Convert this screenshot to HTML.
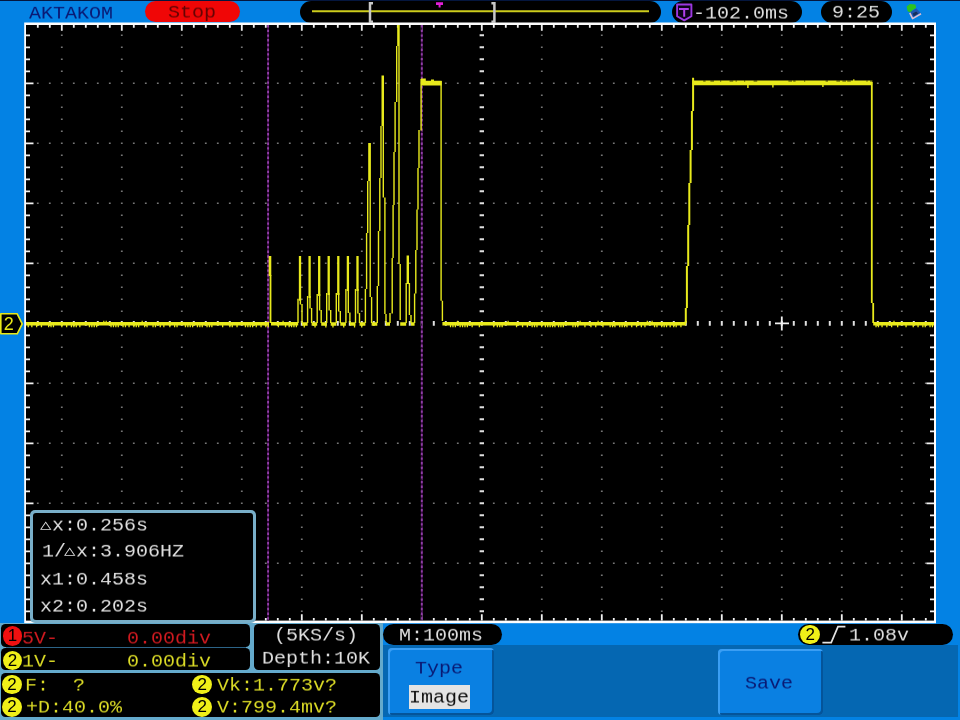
<!DOCTYPE html>
<html lang="en"><head><meta charset="utf-8"><title>AKTAKOM oscilloscope</title>
<style>
html,body{margin:0;padding:0;}
body{width:960px;height:720px;overflow:hidden;background:#0382e4;position:relative;
 font-family:"Liberation Mono","DejaVu Sans Mono",monospace;font-size:20px;line-height:20px;}
.a{position:absolute;white-space:pre;}
.pill{position:absolute;background:#000;border-radius:11px;}
.t{position:absolute;white-space:pre;font-size:20px;line-height:20px;height:20px;transform:scaleY(0.9);transform-origin:0 0;will-change:transform;}
.tri{position:absolute;font-family:"DejaVu Sans Mono",monospace;font-size:19px;line-height:20px;height:20px;color:#dcdcdc;transform:scaleY(.72);transform-origin:0 100%;}
.w{color:#dedede;} .y{color:#dada26;} .r{color:#d01a20;} .n{color:#0a1a74;}
.box{position:absolute;background:#000;border-radius:4.5px;}
.circ{position:absolute;width:19.8px;height:19.8px;border-radius:50%;color:#000;
 font-family:"Liberation Sans",sans-serif;font-size:17px;line-height:19.8px;text-align:center;}
.btn{position:absolute;background:#0a80e2;border-radius:4px;box-shadow:inset 2px 2px 0 #3a9ef4, inset -2px -2px 0 #04549a;}
</style></head><body>
<!-- top strip -->
<div class="a" style="left:0;top:0;width:960px;height:1.3px;background:#04163e"></div>

<div class="t n" style="left:29.0px;top:5.1px;">AKTAKOM</div>
<div class="pill" style="left:144.6px;top:1.2px;width:95.6px;height:20.6px;background:#f00606"></div>
<div class="t " style="left:167.6px;top:3.6px;color:#640404">Stop</div>
<div class="pill" style="left:300.4px;top:0.6px;width:360.6px;height:22.2px"></div>
<div class="pill" style="left:671.8px;top:0.6px;width:130px;height:22px"></div>
<div class="t w" style="left:692.8px;top:5.1px;">-102.0ms</div>
<div class="pill" style="left:820.6px;top:0.6px;width:71.2px;height:22px"></div>
<div class="t w" style="left:831.5px;top:4.1px;">9:25</div>

<!-- graticule + waveform -->
<svg class="a" style="left:0;top:0" width="960" height="720" viewBox="0 0 960 720">
<rect x="24.2" y="22.5" width="911.8" height="600.7" fill="#fdfdfd"/>
<rect x="26" y="25" width="908" height="595.6" fill="#000"/>
<path d="M36.9 83.3h1.8M48.9 83.3h1.8M60.9 83.3h1.8M72.9 83.3h1.8M84.9 83.3h1.8M96.9 83.3h1.8M108.9 83.3h1.8M120.9 83.3h1.8M132.9 83.3h1.8M144.9 83.3h1.8M156.9 83.3h1.8M168.9 83.3h1.8M180.9 83.3h1.8M192.9 83.3h1.8M204.9 83.3h1.8M216.9 83.3h1.8M228.9 83.3h1.8M240.9 83.3h1.8M252.9 83.3h1.8M264.9 83.3h1.8M276.9 83.3h1.8M288.9 83.3h1.8M300.9 83.3h1.8M312.9 83.3h1.8M324.9 83.3h1.8M336.9 83.3h1.8M348.9 83.3h1.8M360.9 83.3h1.8M372.9 83.3h1.8M384.9 83.3h1.8M396.9 83.3h1.8M408.9 83.3h1.8M420.9 83.3h1.8M432.9 83.3h1.8M444.9 83.3h1.8M456.9 83.3h1.8M468.9 83.3h1.8M492.9 83.3h1.8M504.9 83.3h1.8M516.9 83.3h1.8M528.9 83.3h1.8M540.9 83.3h1.8M552.9 83.3h1.8M564.9 83.3h1.8M576.9 83.3h1.8M588.9 83.3h1.8M600.9 83.3h1.8M612.9 83.3h1.8M624.9 83.3h1.8M636.9 83.3h1.8M648.9 83.3h1.8M660.9 83.3h1.8M672.9 83.3h1.8M684.9 83.3h1.8M696.9 83.3h1.8M708.9 83.3h1.8M720.9 83.3h1.8M732.9 83.3h1.8M744.9 83.3h1.8M756.9 83.3h1.8M768.9 83.3h1.8M780.9 83.3h1.8M792.9 83.3h1.8M804.9 83.3h1.8M816.9 83.3h1.8M828.9 83.3h1.8M840.9 83.3h1.8M852.9 83.3h1.8M864.9 83.3h1.8M876.9 83.3h1.8M888.9 83.3h1.8M900.9 83.3h1.8M912.9 83.3h1.8M924.9 83.3h1.8M36.9 143.3h1.8M48.9 143.3h1.8M60.9 143.3h1.8M72.9 143.3h1.8M84.9 143.3h1.8M96.9 143.3h1.8M108.9 143.3h1.8M120.9 143.3h1.8M132.9 143.3h1.8M144.9 143.3h1.8M156.9 143.3h1.8M168.9 143.3h1.8M180.9 143.3h1.8M192.9 143.3h1.8M204.9 143.3h1.8M216.9 143.3h1.8M228.9 143.3h1.8M240.9 143.3h1.8M252.9 143.3h1.8M264.9 143.3h1.8M276.9 143.3h1.8M288.9 143.3h1.8M300.9 143.3h1.8M312.9 143.3h1.8M324.9 143.3h1.8M336.9 143.3h1.8M348.9 143.3h1.8M360.9 143.3h1.8M372.9 143.3h1.8M384.9 143.3h1.8M396.9 143.3h1.8M408.9 143.3h1.8M420.9 143.3h1.8M432.9 143.3h1.8M444.9 143.3h1.8M456.9 143.3h1.8M468.9 143.3h1.8M492.9 143.3h1.8M504.9 143.3h1.8M516.9 143.3h1.8M528.9 143.3h1.8M540.9 143.3h1.8M552.9 143.3h1.8M564.9 143.3h1.8M576.9 143.3h1.8M588.9 143.3h1.8M600.9 143.3h1.8M612.9 143.3h1.8M624.9 143.3h1.8M636.9 143.3h1.8M648.9 143.3h1.8M660.9 143.3h1.8M672.9 143.3h1.8M684.9 143.3h1.8M696.9 143.3h1.8M708.9 143.3h1.8M720.9 143.3h1.8M732.9 143.3h1.8M744.9 143.3h1.8M756.9 143.3h1.8M768.9 143.3h1.8M780.9 143.3h1.8M792.9 143.3h1.8M804.9 143.3h1.8M816.9 143.3h1.8M828.9 143.3h1.8M840.9 143.3h1.8M852.9 143.3h1.8M864.9 143.3h1.8M876.9 143.3h1.8M888.9 143.3h1.8M900.9 143.3h1.8M912.9 143.3h1.8M924.9 143.3h1.8M36.9 203.3h1.8M48.9 203.3h1.8M60.9 203.3h1.8M72.9 203.3h1.8M84.9 203.3h1.8M96.9 203.3h1.8M108.9 203.3h1.8M120.9 203.3h1.8M132.9 203.3h1.8M144.9 203.3h1.8M156.9 203.3h1.8M168.9 203.3h1.8M180.9 203.3h1.8M192.9 203.3h1.8M204.9 203.3h1.8M216.9 203.3h1.8M228.9 203.3h1.8M240.9 203.3h1.8M252.9 203.3h1.8M264.9 203.3h1.8M276.9 203.3h1.8M288.9 203.3h1.8M300.9 203.3h1.8M312.9 203.3h1.8M324.9 203.3h1.8M336.9 203.3h1.8M348.9 203.3h1.8M360.9 203.3h1.8M372.9 203.3h1.8M384.9 203.3h1.8M396.9 203.3h1.8M408.9 203.3h1.8M420.9 203.3h1.8M432.9 203.3h1.8M444.9 203.3h1.8M456.9 203.3h1.8M468.9 203.3h1.8M492.9 203.3h1.8M504.9 203.3h1.8M516.9 203.3h1.8M528.9 203.3h1.8M540.9 203.3h1.8M552.9 203.3h1.8M564.9 203.3h1.8M576.9 203.3h1.8M588.9 203.3h1.8M600.9 203.3h1.8M612.9 203.3h1.8M624.9 203.3h1.8M636.9 203.3h1.8M648.9 203.3h1.8M660.9 203.3h1.8M672.9 203.3h1.8M684.9 203.3h1.8M696.9 203.3h1.8M708.9 203.3h1.8M720.9 203.3h1.8M732.9 203.3h1.8M744.9 203.3h1.8M756.9 203.3h1.8M768.9 203.3h1.8M780.9 203.3h1.8M792.9 203.3h1.8M804.9 203.3h1.8M816.9 203.3h1.8M828.9 203.3h1.8M840.9 203.3h1.8M852.9 203.3h1.8M864.9 203.3h1.8M876.9 203.3h1.8M888.9 203.3h1.8M900.9 203.3h1.8M912.9 203.3h1.8M924.9 203.3h1.8M36.9 263.3h1.8M48.9 263.3h1.8M60.9 263.3h1.8M72.9 263.3h1.8M84.9 263.3h1.8M96.9 263.3h1.8M108.9 263.3h1.8M120.9 263.3h1.8M132.9 263.3h1.8M144.9 263.3h1.8M156.9 263.3h1.8M168.9 263.3h1.8M180.9 263.3h1.8M192.9 263.3h1.8M204.9 263.3h1.8M216.9 263.3h1.8M228.9 263.3h1.8M240.9 263.3h1.8M252.9 263.3h1.8M264.9 263.3h1.8M276.9 263.3h1.8M288.9 263.3h1.8M300.9 263.3h1.8M312.9 263.3h1.8M324.9 263.3h1.8M336.9 263.3h1.8M348.9 263.3h1.8M360.9 263.3h1.8M372.9 263.3h1.8M384.9 263.3h1.8M396.9 263.3h1.8M408.9 263.3h1.8M420.9 263.3h1.8M432.9 263.3h1.8M444.9 263.3h1.8M456.9 263.3h1.8M468.9 263.3h1.8M492.9 263.3h1.8M504.9 263.3h1.8M516.9 263.3h1.8M528.9 263.3h1.8M540.9 263.3h1.8M552.9 263.3h1.8M564.9 263.3h1.8M576.9 263.3h1.8M588.9 263.3h1.8M600.9 263.3h1.8M612.9 263.3h1.8M624.9 263.3h1.8M636.9 263.3h1.8M648.9 263.3h1.8M660.9 263.3h1.8M672.9 263.3h1.8M684.9 263.3h1.8M696.9 263.3h1.8M708.9 263.3h1.8M720.9 263.3h1.8M732.9 263.3h1.8M744.9 263.3h1.8M756.9 263.3h1.8M768.9 263.3h1.8M780.9 263.3h1.8M792.9 263.3h1.8M804.9 263.3h1.8M816.9 263.3h1.8M828.9 263.3h1.8M840.9 263.3h1.8M852.9 263.3h1.8M864.9 263.3h1.8M876.9 263.3h1.8M888.9 263.3h1.8M900.9 263.3h1.8M912.9 263.3h1.8M924.9 263.3h1.8M36.9 383.3h1.8M48.9 383.3h1.8M60.9 383.3h1.8M72.9 383.3h1.8M84.9 383.3h1.8M96.9 383.3h1.8M108.9 383.3h1.8M120.9 383.3h1.8M132.9 383.3h1.8M144.9 383.3h1.8M156.9 383.3h1.8M168.9 383.3h1.8M180.9 383.3h1.8M192.9 383.3h1.8M204.9 383.3h1.8M216.9 383.3h1.8M228.9 383.3h1.8M240.9 383.3h1.8M252.9 383.3h1.8M264.9 383.3h1.8M276.9 383.3h1.8M288.9 383.3h1.8M300.9 383.3h1.8M312.9 383.3h1.8M324.9 383.3h1.8M336.9 383.3h1.8M348.9 383.3h1.8M360.9 383.3h1.8M372.9 383.3h1.8M384.9 383.3h1.8M396.9 383.3h1.8M408.9 383.3h1.8M420.9 383.3h1.8M432.9 383.3h1.8M444.9 383.3h1.8M456.9 383.3h1.8M468.9 383.3h1.8M492.9 383.3h1.8M504.9 383.3h1.8M516.9 383.3h1.8M528.9 383.3h1.8M540.9 383.3h1.8M552.9 383.3h1.8M564.9 383.3h1.8M576.9 383.3h1.8M588.9 383.3h1.8M600.9 383.3h1.8M612.9 383.3h1.8M624.9 383.3h1.8M636.9 383.3h1.8M648.9 383.3h1.8M660.9 383.3h1.8M672.9 383.3h1.8M684.9 383.3h1.8M696.9 383.3h1.8M708.9 383.3h1.8M720.9 383.3h1.8M732.9 383.3h1.8M744.9 383.3h1.8M756.9 383.3h1.8M768.9 383.3h1.8M780.9 383.3h1.8M792.9 383.3h1.8M804.9 383.3h1.8M816.9 383.3h1.8M828.9 383.3h1.8M840.9 383.3h1.8M852.9 383.3h1.8M864.9 383.3h1.8M876.9 383.3h1.8M888.9 383.3h1.8M900.9 383.3h1.8M912.9 383.3h1.8M924.9 383.3h1.8M36.9 443.3h1.8M48.9 443.3h1.8M60.9 443.3h1.8M72.9 443.3h1.8M84.9 443.3h1.8M96.9 443.3h1.8M108.9 443.3h1.8M120.9 443.3h1.8M132.9 443.3h1.8M144.9 443.3h1.8M156.9 443.3h1.8M168.9 443.3h1.8M180.9 443.3h1.8M192.9 443.3h1.8M204.9 443.3h1.8M216.9 443.3h1.8M228.9 443.3h1.8M240.9 443.3h1.8M252.9 443.3h1.8M264.9 443.3h1.8M276.9 443.3h1.8M288.9 443.3h1.8M300.9 443.3h1.8M312.9 443.3h1.8M324.9 443.3h1.8M336.9 443.3h1.8M348.9 443.3h1.8M360.9 443.3h1.8M372.9 443.3h1.8M384.9 443.3h1.8M396.9 443.3h1.8M408.9 443.3h1.8M420.9 443.3h1.8M432.9 443.3h1.8M444.9 443.3h1.8M456.9 443.3h1.8M468.9 443.3h1.8M492.9 443.3h1.8M504.9 443.3h1.8M516.9 443.3h1.8M528.9 443.3h1.8M540.9 443.3h1.8M552.9 443.3h1.8M564.9 443.3h1.8M576.9 443.3h1.8M588.9 443.3h1.8M600.9 443.3h1.8M612.9 443.3h1.8M624.9 443.3h1.8M636.9 443.3h1.8M648.9 443.3h1.8M660.9 443.3h1.8M672.9 443.3h1.8M684.9 443.3h1.8M696.9 443.3h1.8M708.9 443.3h1.8M720.9 443.3h1.8M732.9 443.3h1.8M744.9 443.3h1.8M756.9 443.3h1.8M768.9 443.3h1.8M780.9 443.3h1.8M792.9 443.3h1.8M804.9 443.3h1.8M816.9 443.3h1.8M828.9 443.3h1.8M840.9 443.3h1.8M852.9 443.3h1.8M864.9 443.3h1.8M876.9 443.3h1.8M888.9 443.3h1.8M900.9 443.3h1.8M912.9 443.3h1.8M924.9 443.3h1.8M36.9 503.3h1.8M48.9 503.3h1.8M60.9 503.3h1.8M72.9 503.3h1.8M84.9 503.3h1.8M96.9 503.3h1.8M108.9 503.3h1.8M120.9 503.3h1.8M132.9 503.3h1.8M144.9 503.3h1.8M156.9 503.3h1.8M168.9 503.3h1.8M180.9 503.3h1.8M192.9 503.3h1.8M204.9 503.3h1.8M216.9 503.3h1.8M228.9 503.3h1.8M240.9 503.3h1.8M252.9 503.3h1.8M264.9 503.3h1.8M276.9 503.3h1.8M288.9 503.3h1.8M300.9 503.3h1.8M312.9 503.3h1.8M324.9 503.3h1.8M336.9 503.3h1.8M348.9 503.3h1.8M360.9 503.3h1.8M372.9 503.3h1.8M384.9 503.3h1.8M396.9 503.3h1.8M408.9 503.3h1.8M420.9 503.3h1.8M432.9 503.3h1.8M444.9 503.3h1.8M456.9 503.3h1.8M468.9 503.3h1.8M492.9 503.3h1.8M504.9 503.3h1.8M516.9 503.3h1.8M528.9 503.3h1.8M540.9 503.3h1.8M552.9 503.3h1.8M564.9 503.3h1.8M576.9 503.3h1.8M588.9 503.3h1.8M600.9 503.3h1.8M612.9 503.3h1.8M624.9 503.3h1.8M636.9 503.3h1.8M648.9 503.3h1.8M660.9 503.3h1.8M672.9 503.3h1.8M684.9 503.3h1.8M696.9 503.3h1.8M708.9 503.3h1.8M720.9 503.3h1.8M732.9 503.3h1.8M744.9 503.3h1.8M756.9 503.3h1.8M768.9 503.3h1.8M780.9 503.3h1.8M792.9 503.3h1.8M804.9 503.3h1.8M816.9 503.3h1.8M828.9 503.3h1.8M840.9 503.3h1.8M852.9 503.3h1.8M864.9 503.3h1.8M876.9 503.3h1.8M888.9 503.3h1.8M900.9 503.3h1.8M912.9 503.3h1.8M924.9 503.3h1.8M36.9 563.3h1.8M48.9 563.3h1.8M60.9 563.3h1.8M72.9 563.3h1.8M84.9 563.3h1.8M96.9 563.3h1.8M108.9 563.3h1.8M120.9 563.3h1.8M132.9 563.3h1.8M144.9 563.3h1.8M156.9 563.3h1.8M168.9 563.3h1.8M180.9 563.3h1.8M192.9 563.3h1.8M204.9 563.3h1.8M216.9 563.3h1.8M228.9 563.3h1.8M240.9 563.3h1.8M252.9 563.3h1.8M264.9 563.3h1.8M276.9 563.3h1.8M288.9 563.3h1.8M300.9 563.3h1.8M312.9 563.3h1.8M324.9 563.3h1.8M336.9 563.3h1.8M348.9 563.3h1.8M360.9 563.3h1.8M372.9 563.3h1.8M384.9 563.3h1.8M396.9 563.3h1.8M408.9 563.3h1.8M420.9 563.3h1.8M432.9 563.3h1.8M444.9 563.3h1.8M456.9 563.3h1.8M468.9 563.3h1.8M492.9 563.3h1.8M504.9 563.3h1.8M516.9 563.3h1.8M528.9 563.3h1.8M540.9 563.3h1.8M552.9 563.3h1.8M564.9 563.3h1.8M576.9 563.3h1.8M588.9 563.3h1.8M600.9 563.3h1.8M612.9 563.3h1.8M624.9 563.3h1.8M636.9 563.3h1.8M648.9 563.3h1.8M660.9 563.3h1.8M672.9 563.3h1.8M684.9 563.3h1.8M696.9 563.3h1.8M708.9 563.3h1.8M720.9 563.3h1.8M732.9 563.3h1.8M744.9 563.3h1.8M756.9 563.3h1.8M768.9 563.3h1.8M780.9 563.3h1.8M792.9 563.3h1.8M804.9 563.3h1.8M816.9 563.3h1.8M828.9 563.3h1.8M840.9 563.3h1.8M852.9 563.3h1.8M864.9 563.3h1.8M876.9 563.3h1.8M888.9 563.3h1.8M900.9 563.3h1.8M912.9 563.3h1.8M924.9 563.3h1.8M60.9 35.3h1.8M60.9 47.3h1.8M60.9 59.3h1.8M60.9 71.3h1.8M60.9 95.3h1.8M60.9 107.3h1.8M60.9 119.3h1.8M60.9 131.3h1.8M60.9 155.3h1.8M60.9 167.3h1.8M60.9 179.3h1.8M60.9 191.3h1.8M60.9 215.3h1.8M60.9 227.3h1.8M60.9 239.3h1.8M60.9 251.3h1.8M60.9 275.3h1.8M60.9 287.3h1.8M60.9 299.3h1.8M60.9 311.3h1.8M60.9 335.3h1.8M60.9 347.3h1.8M60.9 359.3h1.8M60.9 371.3h1.8M60.9 395.3h1.8M60.9 407.3h1.8M60.9 419.3h1.8M60.9 431.3h1.8M60.9 455.3h1.8M60.9 467.3h1.8M60.9 479.3h1.8M60.9 491.3h1.8M60.9 515.3h1.8M60.9 527.3h1.8M60.9 539.3h1.8M60.9 551.3h1.8M60.9 575.3h1.8M60.9 587.3h1.8M60.9 599.3h1.8M60.9 611.3h1.8M120.9 35.3h1.8M120.9 47.3h1.8M120.9 59.3h1.8M120.9 71.3h1.8M120.9 95.3h1.8M120.9 107.3h1.8M120.9 119.3h1.8M120.9 131.3h1.8M120.9 155.3h1.8M120.9 167.3h1.8M120.9 179.3h1.8M120.9 191.3h1.8M120.9 215.3h1.8M120.9 227.3h1.8M120.9 239.3h1.8M120.9 251.3h1.8M120.9 275.3h1.8M120.9 287.3h1.8M120.9 299.3h1.8M120.9 311.3h1.8M120.9 335.3h1.8M120.9 347.3h1.8M120.9 359.3h1.8M120.9 371.3h1.8M120.9 395.3h1.8M120.9 407.3h1.8M120.9 419.3h1.8M120.9 431.3h1.8M120.9 455.3h1.8M120.9 467.3h1.8M120.9 479.3h1.8M120.9 491.3h1.8M120.9 515.3h1.8M120.9 527.3h1.8M120.9 539.3h1.8M120.9 551.3h1.8M120.9 575.3h1.8M120.9 587.3h1.8M120.9 599.3h1.8M120.9 611.3h1.8M180.9 35.3h1.8M180.9 47.3h1.8M180.9 59.3h1.8M180.9 71.3h1.8M180.9 95.3h1.8M180.9 107.3h1.8M180.9 119.3h1.8M180.9 131.3h1.8M180.9 155.3h1.8M180.9 167.3h1.8M180.9 179.3h1.8M180.9 191.3h1.8M180.9 215.3h1.8M180.9 227.3h1.8M180.9 239.3h1.8M180.9 251.3h1.8M180.9 275.3h1.8M180.9 287.3h1.8M180.9 299.3h1.8M180.9 311.3h1.8M180.9 335.3h1.8M180.9 347.3h1.8M180.9 359.3h1.8M180.9 371.3h1.8M180.9 395.3h1.8M180.9 407.3h1.8M180.9 419.3h1.8M180.9 431.3h1.8M180.9 455.3h1.8M180.9 467.3h1.8M180.9 479.3h1.8M180.9 491.3h1.8M180.9 515.3h1.8M180.9 527.3h1.8M180.9 539.3h1.8M180.9 551.3h1.8M180.9 575.3h1.8M180.9 587.3h1.8M180.9 599.3h1.8M180.9 611.3h1.8M240.9 35.3h1.8M240.9 47.3h1.8M240.9 59.3h1.8M240.9 71.3h1.8M240.9 95.3h1.8M240.9 107.3h1.8M240.9 119.3h1.8M240.9 131.3h1.8M240.9 155.3h1.8M240.9 167.3h1.8M240.9 179.3h1.8M240.9 191.3h1.8M240.9 215.3h1.8M240.9 227.3h1.8M240.9 239.3h1.8M240.9 251.3h1.8M240.9 275.3h1.8M240.9 287.3h1.8M240.9 299.3h1.8M240.9 311.3h1.8M240.9 335.3h1.8M240.9 347.3h1.8M240.9 359.3h1.8M240.9 371.3h1.8M240.9 395.3h1.8M240.9 407.3h1.8M240.9 419.3h1.8M240.9 431.3h1.8M240.9 455.3h1.8M240.9 467.3h1.8M240.9 479.3h1.8M240.9 491.3h1.8M240.9 515.3h1.8M240.9 527.3h1.8M240.9 539.3h1.8M240.9 551.3h1.8M240.9 575.3h1.8M240.9 587.3h1.8M240.9 599.3h1.8M240.9 611.3h1.8M300.9 35.3h1.8M300.9 47.3h1.8M300.9 59.3h1.8M300.9 71.3h1.8M300.9 95.3h1.8M300.9 107.3h1.8M300.9 119.3h1.8M300.9 131.3h1.8M300.9 155.3h1.8M300.9 167.3h1.8M300.9 179.3h1.8M300.9 191.3h1.8M300.9 215.3h1.8M300.9 227.3h1.8M300.9 239.3h1.8M300.9 251.3h1.8M300.9 275.3h1.8M300.9 287.3h1.8M300.9 299.3h1.8M300.9 311.3h1.8M300.9 335.3h1.8M300.9 347.3h1.8M300.9 359.3h1.8M300.9 371.3h1.8M300.9 395.3h1.8M300.9 407.3h1.8M300.9 419.3h1.8M300.9 431.3h1.8M300.9 455.3h1.8M300.9 467.3h1.8M300.9 479.3h1.8M300.9 491.3h1.8M300.9 515.3h1.8M300.9 527.3h1.8M300.9 539.3h1.8M300.9 551.3h1.8M300.9 575.3h1.8M300.9 587.3h1.8M300.9 599.3h1.8M300.9 611.3h1.8M360.9 35.3h1.8M360.9 47.3h1.8M360.9 59.3h1.8M360.9 71.3h1.8M360.9 95.3h1.8M360.9 107.3h1.8M360.9 119.3h1.8M360.9 131.3h1.8M360.9 155.3h1.8M360.9 167.3h1.8M360.9 179.3h1.8M360.9 191.3h1.8M360.9 215.3h1.8M360.9 227.3h1.8M360.9 239.3h1.8M360.9 251.3h1.8M360.9 275.3h1.8M360.9 287.3h1.8M360.9 299.3h1.8M360.9 311.3h1.8M360.9 335.3h1.8M360.9 347.3h1.8M360.9 359.3h1.8M360.9 371.3h1.8M360.9 395.3h1.8M360.9 407.3h1.8M360.9 419.3h1.8M360.9 431.3h1.8M360.9 455.3h1.8M360.9 467.3h1.8M360.9 479.3h1.8M360.9 491.3h1.8M360.9 515.3h1.8M360.9 527.3h1.8M360.9 539.3h1.8M360.9 551.3h1.8M360.9 575.3h1.8M360.9 587.3h1.8M360.9 599.3h1.8M360.9 611.3h1.8M420.9 35.3h1.8M420.9 47.3h1.8M420.9 59.3h1.8M420.9 71.3h1.8M420.9 95.3h1.8M420.9 107.3h1.8M420.9 119.3h1.8M420.9 131.3h1.8M420.9 155.3h1.8M420.9 167.3h1.8M420.9 179.3h1.8M420.9 191.3h1.8M420.9 215.3h1.8M420.9 227.3h1.8M420.9 239.3h1.8M420.9 251.3h1.8M420.9 275.3h1.8M420.9 287.3h1.8M420.9 299.3h1.8M420.9 311.3h1.8M420.9 335.3h1.8M420.9 347.3h1.8M420.9 359.3h1.8M420.9 371.3h1.8M420.9 395.3h1.8M420.9 407.3h1.8M420.9 419.3h1.8M420.9 431.3h1.8M420.9 455.3h1.8M420.9 467.3h1.8M420.9 479.3h1.8M420.9 491.3h1.8M420.9 515.3h1.8M420.9 527.3h1.8M420.9 539.3h1.8M420.9 551.3h1.8M420.9 575.3h1.8M420.9 587.3h1.8M420.9 599.3h1.8M420.9 611.3h1.8M540.9 35.3h1.8M540.9 47.3h1.8M540.9 59.3h1.8M540.9 71.3h1.8M540.9 95.3h1.8M540.9 107.3h1.8M540.9 119.3h1.8M540.9 131.3h1.8M540.9 155.3h1.8M540.9 167.3h1.8M540.9 179.3h1.8M540.9 191.3h1.8M540.9 215.3h1.8M540.9 227.3h1.8M540.9 239.3h1.8M540.9 251.3h1.8M540.9 275.3h1.8M540.9 287.3h1.8M540.9 299.3h1.8M540.9 311.3h1.8M540.9 335.3h1.8M540.9 347.3h1.8M540.9 359.3h1.8M540.9 371.3h1.8M540.9 395.3h1.8M540.9 407.3h1.8M540.9 419.3h1.8M540.9 431.3h1.8M540.9 455.3h1.8M540.9 467.3h1.8M540.9 479.3h1.8M540.9 491.3h1.8M540.9 515.3h1.8M540.9 527.3h1.8M540.9 539.3h1.8M540.9 551.3h1.8M540.9 575.3h1.8M540.9 587.3h1.8M540.9 599.3h1.8M540.9 611.3h1.8M600.9 35.3h1.8M600.9 47.3h1.8M600.9 59.3h1.8M600.9 71.3h1.8M600.9 95.3h1.8M600.9 107.3h1.8M600.9 119.3h1.8M600.9 131.3h1.8M600.9 155.3h1.8M600.9 167.3h1.8M600.9 179.3h1.8M600.9 191.3h1.8M600.9 215.3h1.8M600.9 227.3h1.8M600.9 239.3h1.8M600.9 251.3h1.8M600.9 275.3h1.8M600.9 287.3h1.8M600.9 299.3h1.8M600.9 311.3h1.8M600.9 335.3h1.8M600.9 347.3h1.8M600.9 359.3h1.8M600.9 371.3h1.8M600.9 395.3h1.8M600.9 407.3h1.8M600.9 419.3h1.8M600.9 431.3h1.8M600.9 455.3h1.8M600.9 467.3h1.8M600.9 479.3h1.8M600.9 491.3h1.8M600.9 515.3h1.8M600.9 527.3h1.8M600.9 539.3h1.8M600.9 551.3h1.8M600.9 575.3h1.8M600.9 587.3h1.8M600.9 599.3h1.8M600.9 611.3h1.8M660.9 35.3h1.8M660.9 47.3h1.8M660.9 59.3h1.8M660.9 71.3h1.8M660.9 95.3h1.8M660.9 107.3h1.8M660.9 119.3h1.8M660.9 131.3h1.8M660.9 155.3h1.8M660.9 167.3h1.8M660.9 179.3h1.8M660.9 191.3h1.8M660.9 215.3h1.8M660.9 227.3h1.8M660.9 239.3h1.8M660.9 251.3h1.8M660.9 275.3h1.8M660.9 287.3h1.8M660.9 299.3h1.8M660.9 311.3h1.8M660.9 335.3h1.8M660.9 347.3h1.8M660.9 359.3h1.8M660.9 371.3h1.8M660.9 395.3h1.8M660.9 407.3h1.8M660.9 419.3h1.8M660.9 431.3h1.8M660.9 455.3h1.8M660.9 467.3h1.8M660.9 479.3h1.8M660.9 491.3h1.8M660.9 515.3h1.8M660.9 527.3h1.8M660.9 539.3h1.8M660.9 551.3h1.8M660.9 575.3h1.8M660.9 587.3h1.8M660.9 599.3h1.8M660.9 611.3h1.8M720.9 35.3h1.8M720.9 47.3h1.8M720.9 59.3h1.8M720.9 71.3h1.8M720.9 95.3h1.8M720.9 107.3h1.8M720.9 119.3h1.8M720.9 131.3h1.8M720.9 155.3h1.8M720.9 167.3h1.8M720.9 179.3h1.8M720.9 191.3h1.8M720.9 215.3h1.8M720.9 227.3h1.8M720.9 239.3h1.8M720.9 251.3h1.8M720.9 275.3h1.8M720.9 287.3h1.8M720.9 299.3h1.8M720.9 311.3h1.8M720.9 335.3h1.8M720.9 347.3h1.8M720.9 359.3h1.8M720.9 371.3h1.8M720.9 395.3h1.8M720.9 407.3h1.8M720.9 419.3h1.8M720.9 431.3h1.8M720.9 455.3h1.8M720.9 467.3h1.8M720.9 479.3h1.8M720.9 491.3h1.8M720.9 515.3h1.8M720.9 527.3h1.8M720.9 539.3h1.8M720.9 551.3h1.8M720.9 575.3h1.8M720.9 587.3h1.8M720.9 599.3h1.8M720.9 611.3h1.8M780.9 35.3h1.8M780.9 47.3h1.8M780.9 59.3h1.8M780.9 71.3h1.8M780.9 95.3h1.8M780.9 107.3h1.8M780.9 119.3h1.8M780.9 131.3h1.8M780.9 155.3h1.8M780.9 167.3h1.8M780.9 179.3h1.8M780.9 191.3h1.8M780.9 215.3h1.8M780.9 227.3h1.8M780.9 239.3h1.8M780.9 251.3h1.8M780.9 275.3h1.8M780.9 287.3h1.8M780.9 299.3h1.8M780.9 311.3h1.8M780.9 335.3h1.8M780.9 347.3h1.8M780.9 359.3h1.8M780.9 371.3h1.8M780.9 395.3h1.8M780.9 407.3h1.8M780.9 419.3h1.8M780.9 431.3h1.8M780.9 455.3h1.8M780.9 467.3h1.8M780.9 479.3h1.8M780.9 491.3h1.8M780.9 515.3h1.8M780.9 527.3h1.8M780.9 539.3h1.8M780.9 551.3h1.8M780.9 575.3h1.8M780.9 587.3h1.8M780.9 599.3h1.8M780.9 611.3h1.8M840.9 35.3h1.8M840.9 47.3h1.8M840.9 59.3h1.8M840.9 71.3h1.8M840.9 95.3h1.8M840.9 107.3h1.8M840.9 119.3h1.8M840.9 131.3h1.8M840.9 155.3h1.8M840.9 167.3h1.8M840.9 179.3h1.8M840.9 191.3h1.8M840.9 215.3h1.8M840.9 227.3h1.8M840.9 239.3h1.8M840.9 251.3h1.8M840.9 275.3h1.8M840.9 287.3h1.8M840.9 299.3h1.8M840.9 311.3h1.8M840.9 335.3h1.8M840.9 347.3h1.8M840.9 359.3h1.8M840.9 371.3h1.8M840.9 395.3h1.8M840.9 407.3h1.8M840.9 419.3h1.8M840.9 431.3h1.8M840.9 455.3h1.8M840.9 467.3h1.8M840.9 479.3h1.8M840.9 491.3h1.8M840.9 515.3h1.8M840.9 527.3h1.8M840.9 539.3h1.8M840.9 551.3h1.8M840.9 575.3h1.8M840.9 587.3h1.8M840.9 599.3h1.8M840.9 611.3h1.8M900.9 35.3h1.8M900.9 47.3h1.8M900.9 59.3h1.8M900.9 71.3h1.8M900.9 95.3h1.8M900.9 107.3h1.8M900.9 119.3h1.8M900.9 131.3h1.8M900.9 155.3h1.8M900.9 167.3h1.8M900.9 179.3h1.8M900.9 191.3h1.8M900.9 215.3h1.8M900.9 227.3h1.8M900.9 239.3h1.8M900.9 251.3h1.8M900.9 275.3h1.8M900.9 287.3h1.8M900.9 299.3h1.8M900.9 311.3h1.8M900.9 335.3h1.8M900.9 347.3h1.8M900.9 359.3h1.8M900.9 371.3h1.8M900.9 395.3h1.8M900.9 407.3h1.8M900.9 419.3h1.8M900.9 431.3h1.8M900.9 455.3h1.8M900.9 467.3h1.8M900.9 479.3h1.8M900.9 491.3h1.8M900.9 515.3h1.8M900.9 527.3h1.8M900.9 539.3h1.8M900.9 551.3h1.8M900.9 575.3h1.8M900.9 587.3h1.8M900.9 599.3h1.8M900.9 611.3h1.8" stroke="#767676" stroke-width="1.5" fill="none"/>
<path d="M37.8 321.0v4.7M49.8 321.0v4.7M61.8 321.0v4.7M73.8 321.0v4.7M85.8 321.0v4.7M97.8 321.0v4.7M109.8 321.0v4.7M121.8 321.0v4.7M133.8 321.0v4.7M145.8 321.0v4.7M157.8 321.0v4.7M169.8 321.0v4.7M181.8 321.0v4.7M193.8 321.0v4.7M205.8 321.0v4.7M217.8 321.0v4.7M229.8 321.0v4.7M241.8 321.0v4.7M253.8 321.0v4.7M265.8 321.0v4.7M277.8 321.0v4.7M289.8 321.0v4.7M301.8 321.0v4.7M313.8 321.0v4.7M325.8 321.0v4.7M337.8 321.0v4.7M349.8 321.0v4.7M361.8 321.0v4.7M373.8 321.0v4.7M385.8 321.0v4.7M397.8 321.0v4.7M409.8 321.0v4.7M421.8 321.0v4.7M433.8 321.0v4.7M445.8 321.0v4.7M457.8 321.0v4.7M469.8 321.0v4.7M481.8 321.0v4.7M493.8 321.0v4.7M505.8 321.0v4.7M517.8 321.0v4.7M529.8 321.0v4.7M541.8 321.0v4.7M553.8 321.0v4.7M565.8 321.0v4.7M577.8 321.0v4.7M589.8 321.0v4.7M601.8 321.0v4.7M613.8 321.0v4.7M625.8 321.0v4.7M637.8 321.0v4.7M649.8 321.0v4.7M661.8 321.0v4.7M673.8 321.0v4.7M685.8 321.0v4.7M697.8 321.0v4.7M709.8 321.0v4.7M721.8 321.0v4.7M733.8 321.0v4.7M745.8 321.0v4.7M757.8 321.0v4.7M769.8 321.0v4.7M781.8 321.0v4.7M793.8 321.0v4.7M805.8 321.0v4.7M817.8 321.0v4.7M829.8 321.0v4.7M841.8 321.0v4.7M853.8 321.0v4.7M865.8 321.0v4.7M877.8 321.0v4.7M889.8 321.0v4.7M901.8 321.0v4.7M913.8 321.0v4.7M925.8 321.0v4.7" stroke="#e0e0e0" stroke-width="2" fill="none"/>
<path d="M479.6 35.3h4.4M479.6 47.3h4.4M479.6 59.3h4.4M479.6 71.3h4.4M479.6 83.3h4.4M479.6 95.3h4.4M479.6 107.3h4.4M479.6 119.3h4.4M479.6 131.3h4.4M479.6 143.3h4.4M479.6 155.3h4.4M479.6 167.3h4.4M479.6 179.3h4.4M479.6 191.3h4.4M479.6 203.3h4.4M479.6 215.3h4.4M479.6 227.3h4.4M479.6 239.3h4.4M479.6 251.3h4.4M479.6 263.3h4.4M479.6 275.3h4.4M479.6 287.3h4.4M479.6 299.3h4.4M479.6 311.3h4.4M479.6 323.3h4.4M479.6 335.3h4.4M479.6 347.3h4.4M479.6 359.3h4.4M479.6 371.3h4.4M479.6 383.3h4.4M479.6 395.3h4.4M479.6 407.3h4.4M479.6 419.3h4.4M479.6 431.3h4.4M479.6 443.3h4.4M479.6 455.3h4.4M479.6 467.3h4.4M479.6 479.3h4.4M479.6 491.3h4.4M479.6 503.3h4.4M479.6 515.3h4.4M479.6 527.3h4.4M479.6 539.3h4.4M479.6 551.3h4.4M479.6 563.3h4.4M479.6 575.3h4.4M479.6 587.3h4.4M479.6 599.3h4.4M479.6 611.3h4.4" stroke="#e0e0e0" stroke-width="2" fill="none"/>
<path d="M37.8 25v2.8M37.8 620.6v-2.7M49.8 25v2.8M49.8 620.6v-2.7M61.8 25v5.8M61.8 620.6v-6.4M73.8 25v2.8M73.8 620.6v-2.7M85.8 25v2.8M85.8 620.6v-2.7M97.8 25v2.8M97.8 620.6v-2.7M109.8 25v2.8M109.8 620.6v-2.7M121.8 25v5.8M121.8 620.6v-6.4M133.8 25v2.8M133.8 620.6v-2.7M145.8 25v2.8M145.8 620.6v-2.7M157.8 25v2.8M157.8 620.6v-2.7M169.8 25v2.8M169.8 620.6v-2.7M181.8 25v5.8M181.8 620.6v-6.4M193.8 25v2.8M193.8 620.6v-2.7M205.8 25v2.8M205.8 620.6v-2.7M217.8 25v2.8M217.8 620.6v-2.7M229.8 25v2.8M229.8 620.6v-2.7M241.8 25v5.8M241.8 620.6v-6.4M253.8 25v2.8M253.8 620.6v-2.7M265.8 25v2.8M265.8 620.6v-2.7M277.8 25v2.8M277.8 620.6v-2.7M289.8 25v2.8M289.8 620.6v-2.7M301.8 25v5.8M301.8 620.6v-6.4M313.8 25v2.8M313.8 620.6v-2.7M325.8 25v2.8M325.8 620.6v-2.7M337.8 25v2.8M337.8 620.6v-2.7M349.8 25v2.8M349.8 620.6v-2.7M361.8 25v5.8M361.8 620.6v-6.4M373.8 25v2.8M373.8 620.6v-2.7M385.8 25v2.8M385.8 620.6v-2.7M397.8 25v2.8M397.8 620.6v-2.7M409.8 25v2.8M409.8 620.6v-2.7M421.8 25v5.8M421.8 620.6v-6.4M433.8 25v2.8M433.8 620.6v-2.7M445.8 25v2.8M445.8 620.6v-2.7M457.8 25v2.8M457.8 620.6v-2.7M469.8 25v2.8M469.8 620.6v-2.7M481.8 25v5.8M481.8 620.6v-6.4M493.8 25v2.8M493.8 620.6v-2.7M505.8 25v2.8M505.8 620.6v-2.7M517.8 25v2.8M517.8 620.6v-2.7M529.8 25v2.8M529.8 620.6v-2.7M541.8 25v5.8M541.8 620.6v-6.4M553.8 25v2.8M553.8 620.6v-2.7M565.8 25v2.8M565.8 620.6v-2.7M577.8 25v2.8M577.8 620.6v-2.7M589.8 25v2.8M589.8 620.6v-2.7M601.8 25v5.8M601.8 620.6v-6.4M613.8 25v2.8M613.8 620.6v-2.7M625.8 25v2.8M625.8 620.6v-2.7M637.8 25v2.8M637.8 620.6v-2.7M649.8 25v2.8M649.8 620.6v-2.7M661.8 25v5.8M661.8 620.6v-6.4M673.8 25v2.8M673.8 620.6v-2.7M685.8 25v2.8M685.8 620.6v-2.7M697.8 25v2.8M697.8 620.6v-2.7M709.8 25v2.8M709.8 620.6v-2.7M721.8 25v5.8M721.8 620.6v-6.4M733.8 25v2.8M733.8 620.6v-2.7M745.8 25v2.8M745.8 620.6v-2.7M757.8 25v2.8M757.8 620.6v-2.7M769.8 25v2.8M769.8 620.6v-2.7M781.8 25v5.8M781.8 620.6v-6.4M793.8 25v2.8M793.8 620.6v-2.7M805.8 25v2.8M805.8 620.6v-2.7M817.8 25v2.8M817.8 620.6v-2.7M829.8 25v2.8M829.8 620.6v-2.7M841.8 25v5.8M841.8 620.6v-6.4M853.8 25v2.8M853.8 620.6v-2.7M865.8 25v2.8M865.8 620.6v-2.7M877.8 25v2.8M877.8 620.6v-2.7M889.8 25v2.8M889.8 620.6v-2.7M901.8 25v5.8M901.8 620.6v-6.4M913.8 25v2.8M913.8 620.6v-2.7M925.8 25v2.8M925.8 620.6v-2.7M26 35.3h4M934 35.3h-4M26 47.3h4M934 47.3h-4M26 59.3h4M934 59.3h-4M26 71.3h4M934 71.3h-4M26 83.3h7.5M934 83.3h-7.5M26 95.3h4M934 95.3h-4M26 107.3h4M934 107.3h-4M26 119.3h4M934 119.3h-4M26 131.3h4M934 131.3h-4M26 143.3h7.5M934 143.3h-7.5M26 155.3h4M934 155.3h-4M26 167.3h4M934 167.3h-4M26 179.3h4M934 179.3h-4M26 191.3h4M934 191.3h-4M26 203.3h7.5M934 203.3h-7.5M26 215.3h4M934 215.3h-4M26 227.3h4M934 227.3h-4M26 239.3h4M934 239.3h-4M26 251.3h4M934 251.3h-4M26 263.3h7.5M934 263.3h-7.5M26 275.3h4M934 275.3h-4M26 287.3h4M934 287.3h-4M26 299.3h4M934 299.3h-4M26 311.3h4M934 311.3h-4M26 323.3h7.5M934 323.3h-7.5M26 335.3h4M934 335.3h-4M26 347.3h4M934 347.3h-4M26 359.3h4M934 359.3h-4M26 371.3h4M934 371.3h-4M26 383.3h7.5M934 383.3h-7.5M26 395.3h4M934 395.3h-4M26 407.3h4M934 407.3h-4M26 419.3h4M934 419.3h-4M26 431.3h4M934 431.3h-4M26 443.3h7.5M934 443.3h-7.5M26 455.3h4M934 455.3h-4M26 467.3h4M934 467.3h-4M26 479.3h4M934 479.3h-4M26 491.3h4M934 491.3h-4M26 503.3h7.5M934 503.3h-7.5M26 515.3h4M934 515.3h-4M26 527.3h4M934 527.3h-4M26 539.3h4M934 539.3h-4M26 551.3h4M934 551.3h-4M26 563.3h7.5M934 563.3h-7.5M26 575.3h4M934 575.3h-4M26 587.3h4M934 587.3h-4M26 599.3h4M934 599.3h-4M26 611.3h4M934 611.3h-4" stroke="#f2f2f2" stroke-width="1.8" fill="none"/>
<path d="M268.1 25V620.6" stroke="#400a4c" stroke-width="1.8" fill="none"/>
<path d="M268.1 25V620.6" stroke="#9040a6" stroke-width="1.9" stroke-dasharray="2.4 2.3" fill="none"/>
<path d="M421.8 25V620.6" stroke="#400a4c" stroke-width="1.8" fill="none"/>
<path d="M421.8 25V620.6" stroke="#9040a6" stroke-width="1.9" stroke-dasharray="2.4 2.3" fill="none"/>
<path d="M270.0 256.0V276.0" stroke="#e8ea1c" stroke-width="2.6" fill="none"/>
<path d="M270.5 275.0V323.0M871.8 82.0V303.0M873.2 303.0V323.0" stroke="#e8ea1c" stroke-width="1.8" fill="none"/>
<path d="M298.0 298.8V323.0M300.4 298.8V304.6M302.0 304.0V323.0M307.6 296.0V323.0M310.0 296.0V308.6M311.6 308.0V323.0M317.2 294.0V323.0M319.6 294.0V310.6M321.2 310.0V323.0M326.7 293.0V323.0M329.1 293.0V310.6M330.7 310.0V323.0M336.3 293.0V323.0M338.7 293.0V311.6M340.3 311.0V323.0M345.9 289.0V323.0M348.3 289.0V313.1M349.9 312.5V323.0M355.5 289.0V323.0M357.9 289.0V313.6M359.5 313.0V323.0M365.4 289.0V323.0M366.6 233.0V289.0M367.7 181.0V233.0M368.9 143.0V181.0M370.2 143.0V297.0M371.6 297.0V323.0M377.3 286.0V323.0M378.5 231.0V286.0M379.8 178.0V231.0M381.0 126.0V178.0M382.2 75.5V126.0M383.3 75.5V197.6M384.9 197.6V314.0M386.0 314.0V323.0M390.0 313.0V323.0M392.2 258.0V313.5M393.1 205.0V258.0M394.0 152.0V205.0M395.1 102.0V152.0M396.7 46.0V102.0M397.9 25.0V46.0M399.0 25.0V264.0M400.2 264.0V320.0M406.2 283.0V323.0M409.4 283.0V315.0M411.0 315.0V323.0M414.6 293.5V323.0M415.8 250.0V293.5M417.0 209.6V250.0M418.0 168.0V209.6M419.0 130.0V168.0M421.1 79.0V130.5M441.1 81.0V300.8M442.4 300.8V321.0" stroke="#e8ea1c" stroke-width="1.4" fill="none"/>
<path d="M300.0 256.0V300.8M309.6 256.0V298.0M319.2 256.0V296.0M328.7 256.0V295.0M338.3 256.0V295.0M347.9 256.0V291.0M357.5 256.0V291.0" stroke="#e8ea1c" stroke-width="2.3" fill="none"/>
<path d="M407.8 255.5V284.0" stroke="#e8ea1c" stroke-width="2.4" fill="none"/>
<path d="M685.8 308.0V323.0M686.9 266.0V308.0M688.2 225.0V266.0M689.3 183.0V225.0M690.6 150.0V183.0M691.9 111.0V150.0M693.1 77.8V111.0" stroke="#e8ea1c" stroke-width="2.0" fill="none"/>
<path d="M26.0 321.9H269.0V325.6H26.0zM27.6 325.4H28.9V327.3H27.6zM31.2 325.4H32.5V327.3H31.2zM36.0 325.4H37.3V327.3H36.0zM40.8 325.4H42.1V327.3H40.8zM48.0 325.4H49.3V327.3H48.0zM50.4 325.4H51.7V327.3H50.4zM52.8 325.4H54.1V327.3H52.8zM61.2 325.4H62.5V327.3H61.2zM66.0 325.4H67.3V327.3H66.0zM70.8 325.4H72.1V327.3H70.8zM73.2 325.4H74.5V327.3H73.2zM75.6 325.4H76.9V327.3H75.6zM79.2 325.4H80.5V327.3H79.2zM88.8 325.4H90.1V327.3H88.8zM91.2 325.4H92.5V327.3H91.2zM93.6 325.4H94.9V327.3H93.6zM96.0 325.4H97.3V327.3H96.0zM103.2 320.8H104.4V322.1H103.2zM105.6 320.8H106.8V322.1H105.6zM110.4 325.4H111.7V327.3H110.4zM112.8 325.4H114.1V327.3H112.8zM115.2 325.4H116.5V327.3H115.2zM117.6 325.4H118.9V327.3H117.6zM122.4 325.4H123.7V327.3H122.4zM124.8 325.4H126.1V327.3H124.8zM128.4 325.4H129.7V327.3H128.4zM133.2 325.4H134.5V327.3H133.2zM135.6 325.4H136.9V327.3H135.6zM138.0 325.4H139.3V327.3H138.0zM141.6 320.8H142.8V322.1H141.6zM144.0 325.4H145.3V327.3H144.0zM146.4 325.4H147.7V327.3H146.4zM152.4 325.4H153.7V327.3H152.4zM154.8 325.4H156.1V327.3H154.8zM159.6 325.4H160.9V327.3H159.6zM163.2 325.4H164.5V327.3H163.2zM169.2 325.4H170.5V327.3H169.2zM174.0 325.4H175.3V327.3H174.0zM176.4 325.4H177.7V327.3H176.4zM184.8 325.4H186.1V327.3H184.8zM187.2 325.4H188.5V327.3H187.2zM189.6 325.4H190.9V327.3H189.6zM192.0 325.4H193.3V327.3H192.0zM196.8 325.4H198.1V327.3H196.8zM199.2 325.4H200.5V327.3H199.2zM201.6 325.4H202.9V327.3H201.6zM206.4 325.4H207.7V327.3H206.4zM208.8 325.4H210.1V327.3H208.8zM211.2 325.4H212.5V327.3H211.2zM222.0 325.4H223.3V327.3H222.0zM229.2 325.4H230.5V327.3H229.2zM231.6 325.4H232.9V327.3H231.6zM236.4 325.4H237.7V327.3H236.4zM244.8 325.4H246.1V327.3H244.8zM247.2 325.4H248.5V327.3H247.2zM249.6 325.4H250.9V327.3H249.6zM252.0 325.4H253.3V327.3H252.0zM255.6 325.4H256.9V327.3H255.6zM260.4 325.4H261.7V327.3H260.4zM265.2 325.4H266.5V327.3H265.2zM267.6 325.4H268.9V327.3H267.6zM271.0 321.9H298.2V325.6H271.0zM277.7 325.4H279.0V327.3H277.7zM282.5 320.8H283.7V322.1H282.5zM284.9 325.4H286.2V327.3H284.9zM288.5 325.4H289.8V327.3H288.5zM290.9 325.4H292.2V327.3H290.9zM293.3 325.4H294.6V327.3H293.3zM295.7 325.4H297.0V327.3H295.7zM302.0 322.3H307.6V325.8H302.0zM303.6 325.6H304.9V327.4H303.6zM311.6 322.3H317.2V325.8H311.6zM314.4 325.6H315.7V327.4H314.4zM321.2 322.3H326.7V325.8H321.2zM325.2 325.6H326.5V327.4H325.2zM330.7 322.3H336.3V325.8H330.7zM332.3 325.6H333.6V327.4H332.3zM340.3 322.3H345.9V325.8H340.3zM343.1 325.6H344.4V327.4H343.1zM349.9 322.3H355.5V325.8H349.9zM353.9 325.6H355.2V327.4H353.9zM359.5 322.3H365.4V325.8H359.5zM361.1 325.6H362.4V327.4H361.1zM371.6 322.3H377.3V325.8H371.6zM386.0 322.3H390.0V325.8H386.0zM400.2 322.3H406.2V325.8H400.2zM411.0 322.3H414.6V325.8H411.0zM421.0 78.6H425.8V83.0H421.0zM421.0 80.8H441.6V85.5H421.0zM431.0 79.6H434.0V81.0H431.0zM442.4 321.9H686.2V325.6H442.4zM449.9 325.4H451.2V327.3H449.9zM452.3 325.4H453.6V327.3H452.3zM454.7 325.4H456.0V327.3H454.7zM457.1 320.8H458.3V322.1H457.1zM459.5 325.4H460.8V327.3H459.5zM461.9 325.4H463.2V327.3H461.9zM464.3 325.4H465.6V327.3H464.3zM466.7 325.4H468.0V327.3H466.7zM471.5 325.4H472.8V327.3H471.5zM478.7 325.4H480.0V327.3H478.7zM493.1 325.4H494.4V327.3H493.1zM496.7 325.4H498.0V327.3H496.7zM499.1 325.4H500.4V327.3H499.1zM501.5 325.4H502.8V327.3H501.5zM507.5 320.8H508.7V322.1H507.5zM515.9 325.4H517.2V327.3H515.9zM521.9 325.4H523.2V327.3H521.9zM526.7 325.4H528.0V327.3H526.7zM531.5 325.4H532.8V327.3H531.5zM533.9 325.4H535.2V327.3H533.9zM536.3 325.4H537.6V327.3H536.3zM541.1 325.4H542.4V327.3H541.1zM544.7 325.4H546.0V327.3H544.7zM547.1 325.4H548.4V327.3H547.1zM549.5 325.4H550.8V327.3H549.5zM551.9 325.4H553.2V327.3H551.9zM554.3 325.4H555.6V327.3H554.3zM557.9 325.4H559.2V327.3H557.9zM560.3 325.4H561.6V327.3H560.3zM562.7 325.4H564.0V327.3H562.7zM572.3 325.4H573.6V327.3H572.3zM574.7 325.4H576.0V327.3H574.7zM577.1 325.4H578.4V327.3H577.1zM579.5 320.8H580.7V322.1H579.5zM584.3 325.4H585.6V327.3H584.3zM590.3 325.4H591.6V327.3H590.3zM595.1 325.4H596.4V327.3H595.1zM597.5 320.8H598.7V322.1H597.5zM602.3 325.4H603.6V327.3H602.3zM609.5 325.4H610.8V327.3H609.5zM611.9 325.4H613.2V327.3H611.9zM614.3 325.4H615.6V327.3H614.3zM619.1 325.4H620.4V327.3H619.1zM621.5 325.4H622.8V327.3H621.5zM623.9 325.4H625.2V327.3H623.9zM626.3 325.4H627.6V327.3H626.3zM631.1 325.4H632.4V327.3H631.1zM635.9 325.4H637.2V327.3H635.9zM640.7 325.4H642.0V327.3H640.7zM644.3 325.4H645.6V327.3H644.3zM646.7 320.8H647.9V322.1H646.7zM651.5 320.8H652.7V322.1H651.5zM653.9 325.4H655.2V327.3H653.9zM656.3 325.4H657.6V327.3H656.3zM661.1 325.4H662.4V327.3H661.1zM663.5 325.4H664.8V327.3H663.5zM665.9 325.4H667.2V327.3H665.9zM669.5 325.4H670.8V327.3H669.5zM673.1 325.4H674.4V327.3H673.1zM675.5 325.4H676.8V327.3H675.5zM680.3 325.4H681.6V327.3H680.3zM692.6 80.4H872.2V85.3H692.6zM853.2 79.3H854.4V80.6H853.2zM747.2 85.0H748.6V87.9H747.2zM772.2 85.0H773.6V87.5H772.2zM822.2 85.0H823.6V87.1H822.2zM873.2 321.9H934.0V325.6H873.2zM875.4 325.4H876.7V327.3H875.4zM877.8 325.4H879.1V327.3H877.8zM881.4 325.4H882.7V327.3H881.4zM886.2 325.4H887.5V327.3H886.2zM891.0 325.4H892.3V327.3H891.0zM893.4 320.8H894.6V322.1H893.4zM897.0 325.4H898.3V327.3H897.0zM905.4 325.4H906.7V327.3H905.4zM912.6 325.4H913.9V327.3H912.6zM917.4 325.4H918.7V327.3H917.4zM922.2 325.4H923.5V327.3H922.2zM924.6 325.4H925.9V327.3H924.6zM929.4 325.4H930.7V327.3H929.4zM931.8 325.4H933.1V327.3H931.8z" fill="#e8ea1c"/>
<path d="M703.2 80.2H705.6V81.5H703.2zM710.4 80.2H714.0V81.5H710.4zM720.0 80.2H721.2V81.5H720.0zM729.6 80.2H733.2V81.5H729.6zM735.6 80.2H736.8V81.5H735.6zM744.0 80.2H745.2V81.5H744.0zM753.6 80.2H757.2V81.5H753.6zM788.4 80.2H792.0V81.5H788.4zM793.2 80.2H795.6V81.5H793.2zM804.0 80.2H805.2V81.5H804.0zM825.6 80.2H828.0V81.5H825.6zM836.4 80.2H840.0V81.5H836.4zM842.4 80.2H846.0V81.5H842.4zM847.2 80.2H850.8V81.5H847.2zM866.4 80.2H867.6V81.5H866.4zM870.0 80.2H872.4V81.5H870.0z" fill="#3a3a06"/>
<path d="M775 323.4h14M781.8 316.4v14" stroke="#f0f0f0" stroke-width="1.8" fill="none"/>
<!-- horizontal position bar -->
<path d="M312 11.3H649" stroke="#cccc1c" stroke-width="1.9" fill="none"/>
<path d="M373 3.2h-3v18.6h3M491.4 3.2h3v18.6h-3" stroke="#c8c8c8" stroke-width="2.5" fill="none"/>
<path d="M436 2.2h7v2.8h-2.4v2.4h-2v-2.4h-2.6z" fill="#e01ed8"/>
<!-- T shield -->
<path d="M677.1 4.5h14.3v11.7l-7.15 4.2l-7.15-4.2z" fill="#0c0418" stroke="#9c38e0" stroke-width="1.9" stroke-linejoin="round"/>
<path d="M679 9h9.8M684.2 9v7.8" stroke="#b040ec" stroke-width="2" fill="none"/>
<!-- usb icon -->
<path d="M906.6 6.4l3.2-2.4l5.6 0.4l0.8 3.6l-4 2.6l-1.4 2.2l-3.2-1.6z" fill="#2ec41e"/>
<path d="M909.6 12.6l6.6-4.4l5.2 5.6l-9 5.2z" fill="#1f56b0"/>
<path d="M909.8 12.8l2.8 5.8l8.4-4.8" stroke="#dcc0d4" stroke-width="1.6" fill="none" stroke-linejoin="round"/>
<path d="M912.6 13.6l3.6-2.2l2 2.2l-4.4 2.6z" fill="#16305c"/>
<!-- channel 2 marker -->
<path d="M0.8 313.8h16.4l5 10l-5 10H0.8z" fill="#000" stroke="#e8e818" stroke-width="1.6" stroke-linejoin="round"/>
<text x="3.8" y="330.4" font-family="Liberation Sans, sans-serif" font-size="18" fill="#e8e818">2</text>
</svg>

<!-- cursor measurement box -->
<div class="a" style="left:30.3px;top:510px;width:225.6px;height:113.3px;background:#78aec8;border-radius:5px"></div>
<div class="a" style="left:32.9px;top:512.6px;width:220.5px;height:107px;background:#000;border-radius:3px"></div>

<div class="tri" style="left:40.0px;top:510.8px">△</div>
<div class="t w" style="left:51.9px;top:516.5px;">x:0.256s</div>
<div class="t w" style="left:41.5px;top:542.9px;">1/</div>
<div class="tri" style="left:64.0px;top:537.2px">△</div>
<div class="t w" style="left:75.9px;top:542.9px;">x:3.906HZ</div>
<div class="t w" style="left:40.0px;top:571.1px;">x1:0.458s</div>
<div class="t w" style="left:40.0px;top:597.9px;">x2:0.202s</div>

<!-- bottom left info panel -->
<div class="a" style="left:0;top:623.2px;width:383px;height:96.8px;background:#64aacc"></div>
<div class="a" style="left:383px;top:645.3px;width:575.3px;height:71.6px;background:#0567b2"></div>
<div class="box" style="left:1.4px;top:624.2px;width:248.9px;height:22.6px"></div>
<div class="box" style="left:1.4px;top:648px;width:248.9px;height:22.4px"></div>
<div class="box" style="left:253.6px;top:624.2px;width:126px;height:46.2px"></div>
<div class="box" style="left:1.4px;top:673.4px;width:378.2px;height:43.4px"></div>
<div class="a" style="left:6px;top:646.6px;width:240px;height:1.6px;background:#2c6488"></div>

<div class="circ" style="left:2.5px;top:626.3px;background:#f01010">1</div>
<div class="t r" style="left:21.9px;top:629.7px;">5V-</div>
<div class="t r" style="left:126.8px;top:629.6px;">0.00div</div>
<div class="circ" style="left:2.5px;top:650.5px;background:#f0f018">2</div>
<div class="t y" style="left:21.9px;top:653.4px;">1V-</div>
<div class="t y" style="left:126.8px;top:653.4px;">0.00div</div>
<div class="t w" style="left:273.9px;top:627.1px;">(5KS/s)</div>
<div class="t w" style="left:261.8px;top:650.1px;">Depth:10K</div>
<div class="circ" style="left:2.1px;top:674.5px;background:#f0f018">2</div>
<div class="t y" style="left:24.5px;top:676.5px;">F:  ?</div>
<div class="circ" style="left:2.1px;top:696.9px;background:#f0f018">2</div>
<div class="t y" style="left:25.7px;top:699.0px;">+D:40.0%</div>
<div class="circ" style="left:192.4px;top:674.5px;background:#f0f018">2</div>
<div class="t y" style="left:216.7px;top:676.5px;">Vk:1.773v?</div>
<div class="circ" style="left:192.4px;top:696.9px;background:#f0f018">2</div>
<div class="t y" style="left:216.7px;top:699.0px;">V:799.4mv?</div>

<!-- bottom menu -->
<div class="pill" style="left:383.4px;top:623.8px;width:118.6px;height:21.2px"></div>

<div class="t w" style="left:399.0px;top:626.7px;">M:100ms</div>
<div class="btn" style="left:387.5px;top:648.4px;width:106.5px;height:66.6px"></div>
<div class="t n" style="left:414.8px;top:660.3px;">Type</div>
<div class="a" style="left:409px;top:685.4px;width:60.5px;height:23.6px;background:#e4e4e4"></div>
<div class="t " style="left:409.3px;top:689.1px;color:#101010">Image</div>
<div class="btn" style="left:717.6px;top:648.8px;width:105.6px;height:66.4px"></div>
<div class="t n" style="left:744.5px;top:674.8px;">Save</div>
<div class="pill" style="left:797.6px;top:623.8px;width:155px;height:21px"></div>
<div class="circ" style="left:800.4px;top:624.7px;background:#f0f018">2</div>
<svg class="a" style="left:0;top:0" width="960" height="720" viewBox="0 0 960 720">
<path d="M822.4 642.6h8.8l6.8-16h7.4" stroke="#e4e4e4" stroke-width="1.7" fill="none"/>
</svg>
<div class="t w" style="left:848.6px;top:627.4px;">1.08v</div>

</body></html>
